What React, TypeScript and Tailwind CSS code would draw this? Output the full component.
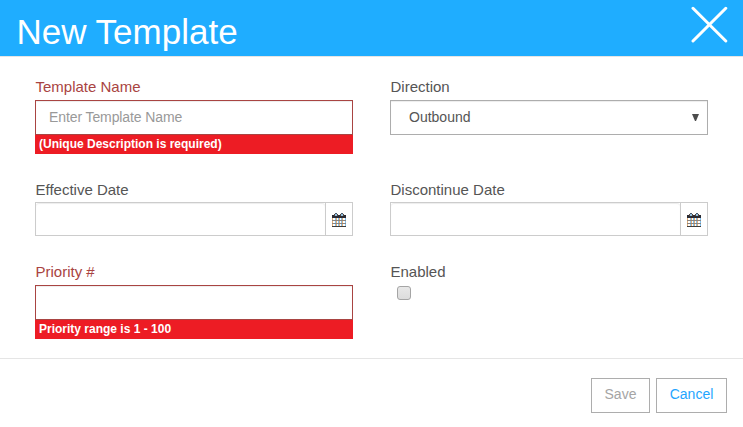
import React from "react";

function Label({ children, invalid = false }: { children: React.ReactNode; invalid?: boolean }) {
  return (
    <label className={`block h-[21px] pl-[0.5px] text-[15px] leading-[19px] ${invalid ? "text-[#a94442]" : "text-[#555555]"}`}>
      {children}
    </label>
  );
}

function ErrorBar({ children }: { children: React.ReactNode }) {
  return (
    <div className="h-[19px] bg-[#ed1c24] pl-[4px] text-[12px] leading-[18px] font-bold text-white">{children}</div>
  );
}

function CalendarIcon() {
  return (
    <svg width="14" height="14" viewBox="0 0 14 14" shapeRendering="crispEdges">
      <path d="M0 5h1v8H0zM4 5h1v8H4zM7 5h1v8H7zM10 5h1v8h-1z" fill="#e3ad75" />
      <path d="M3 5h1v8H3zM6 5h1v8H6zM9 5h1v8H9zM13 5h1v8h-1z" fill="#82c0ee" />
      <path d="M0 7h14v1H0zM0 10h14v1H0z" fill="#8b8580" />
      <path d="M0 2h14v3H0z" fill="#2b2b33" />
      <path d="M2 1h1v2H2zM5 1h1v2H5zM8 1h1v2H8zM11 1h1v2h-1z" fill="#54473f" />
      <path d="M3 0h2v1H3zM9 0h2v1H9z" fill="#4a5a6c" />
      <path d="M3 1h2v2H3zM9 1h2v2H9z" fill="#91bede" />
      <path d="M0 13h14v1H0z" fill="#3f3c3a" />
    </svg>
  );
}

function DateField({ label }: { label: string }) {
  return (
    <div>
      <Label>{label}</Label>
      <div className="mt-[1px] flex h-[34px] w-[318px] border border-[#cccccc]">
        <input
          aria-label={label}
          className="min-w-0 flex-1 rounded-[3px] px-3 text-[14px] shadow-[inset_0_1px_1px_rgba(0,0,0,0.075)] outline-none"
        />
        <button aria-label="Open calendar" className="flex w-[27px] items-center justify-center border-l border-[#cccccc] pt-[2px]">
          <CalendarIcon />
        </button>
      </div>
    </div>
  );
}

export default function App() {
  return (
    <div className="h-[427px] w-[743px] overflow-hidden bg-white font-['Liberation_Sans',Arial,sans-serif]">
      <header className="flex h-[57px] justify-between border-b border-[#e5e5e5] bg-[#1fadff] pl-[16.5px] pr-[15px]">
        <h1 className="pt-[7px] text-[35px] leading-[50px] text-white">New Template</h1>
        <button aria-label="Close" className="mt-[6px] h-[37px] w-[37px]">
          <svg width="37" height="37" viewBox="0 0 37 37" stroke="#ffffff" strokeWidth="3" strokeLinecap="round">
            <path d="M2 2.3L34.8 35M34.8 2.3L2 35" />
          </svg>
        </button>
      </header>

      <main className="grid h-[301px] grid-cols-[318px_318px] grid-rows-[103px_82px_95px] gap-x-[37px] pl-[35px] pt-[20px]">
        <div>
          <Label invalid>Template Name</Label>
          <input
            placeholder="Enter Template Name"
            className="mt-[2px] block h-[35px] w-full border border-[#a94442] px-[13px] pb-[2px] text-[14px] tracking-[-0.1px] text-[#555555] shadow-[inset_0_1px_1px_rgba(0,0,0,0.075)] outline-none placeholder:text-[#999999]"
          />
          <ErrorBar>(Unique Description is required)</ErrorBar>
        </div>
        <div>
          <Label>Direction</Label>
          <button className="mt-[2px] flex h-[35px] w-full items-center justify-between border border-[#adadad] pl-[18px] pr-2 text-[14px] text-[#555555] shadow-[inset_0_1px_1px_rgba(0,0,0,0.075)]">
            <span>Outbound</span>
            <svg width="7" height="7" viewBox="0 0 7 7" fill="#4c4c4c">
              <path d="M0 0h7L4 7H3z" />
            </svg>
          </button>
        </div>
        <DateField label="Effective Date" />
        <DateField label="Discontinue Date" />
        <div>
          <Label invalid>Priority #</Label>
          <input
            aria-label="Priority #"
            className="mt-[2px] block h-[35px] w-full border border-[#a94442] px-[13px] text-[14px] shadow-[inset_0_1px_1px_rgba(0,0,0,0.075)] outline-none"
          />
          <ErrorBar>Priority range is 1 - 100</ErrorBar>
        </div>
        <div>
          <Label>Enabled</Label>
          <input
            type="checkbox"
            aria-label="Enabled"
            className="ml-[7px] mt-[3px] block h-[14px] w-[14px] appearance-none rounded-[3px] border border-[#a5a5a5] bg-linear-to-b from-[#e8e8e8] to-[#dcdcdc]"
          />
        </div>
      </main>

      <footer className="flex h-[69px] justify-end gap-[6px] border-t border-[#e5e5e5] pr-4 pt-[19px] text-[14px] leading-[31px]">
        <button className="h-[35px] w-[59px] border border-[#adadad] pb-[2px] text-[#a5a5a5]">Save</button>
        <button className="h-[35px] w-[71px] border border-[#adadad] pb-[2px] text-[#1fa5ff]">Cancel</button>
      </footer>
    </div>
  );
}
